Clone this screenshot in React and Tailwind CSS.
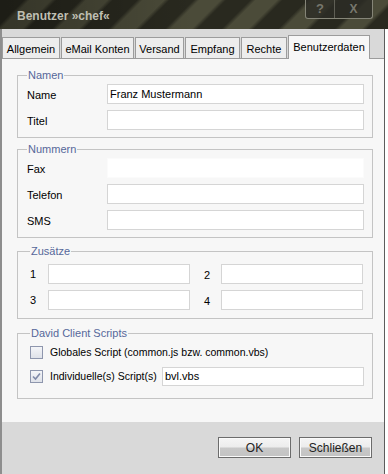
import React from "react";

const tabs = [
  { label: "Allgemein", w: "w-[58px]" },
  { label: "eMail Konten", w: "w-[73px]" },
  { label: "Versand", w: "w-[49px]" },
  { label: "Empfang", w: "w-[55px]" },
  { label: "Rechte", w: "w-[46px]" },
];

function Field({ value = "", disabled = false, className = "" }) {
  return (
    <div
      className={`h-[20px] px-[2px] flex items-center bg-white border ${
        disabled ? "border-[#fbfbfb]" : "border-[#d5d5d5]"
      } ${className}`}
    >
      {value}
    </div>
  );
}

function Group({ title, className = "", children }) {
  return (
    <fieldset className={`border border-[#c4c4c4] pl-[9px] pr-[8px] ${className}`}>
      <legend className="px-[1px] leading-[13px] text-[#56679a]">{title}</legend>
      {children}
    </fieldset>
  );
}

function Row({ label, children }) {
  return (
    <div className="flex items-center">
      <span className="w-[80px] pt-[2px]">{label}</span>
      <div className="flex-1">{children}</div>
    </div>
  );
}

function Check({ checked }) {
  return (
    <span className="shrink-0 w-[13px] h-[13px] border border-[#8e96ad] bg-[linear-gradient(to_bottom,#f4f5f8,#dfe2e9)] flex items-center justify-center">
      {checked && (
        <svg width="11" height="11" viewBox="0 0 11 11">
          <path d="M2 5.5 L4.5 8 L9 2.5" fill="none" stroke="#7f89a8" strokeWidth="1.6" />
        </svg>
      )}
    </span>
  );
}

function Button({ children }) {
  return (
    <button className="w-[73px] h-[21px] border border-[#6c6c6c] bg-[linear-gradient(to_bottom,#f5f5f5_0%,#ececec_48%,#c8c8c8_52%,#c3c3c3_100%)] shadow-[inset_0_0_0_1px_#fafafa] text-[12px] text-[#222] leading-none">
      {children}
    </button>
  );
}

export default function App() {
  return (
    <div className="w-[388px] h-[474px] bg-white overflow-hidden font-['Liberation_Sans',Arial,sans-serif] text-[11px] text-black">
      {/* title bar */}
      <div className="h-[29px] flex items-start bg-[linear-gradient(to_right,rgba(0,0,0,0.3),rgba(0,0,0,0)_50%),repeating-linear-gradient(135deg,#29291f_0px,#29291f_17px,#4b4b39_21px,#4b4b39_36px,#29291f_40px)]">
        <span className="pl-[17px] pt-[7px] text-[12px] font-bold text-[#bfbfb2]">
          Benutzer »chef«
        </span>
        <div className="ml-auto mr-[15px] flex h-[19px] border border-t-0 border-[#858578] rounded-b-[3px] bg-[#2c2c25]/80">
          <span className="w-[29px] flex items-center justify-center text-[13px] font-bold text-[#77776d] border-r border-[#5f5f55]">
            ?
          </span>
          <span className="w-[37px] flex items-center justify-center text-[12px] font-bold text-[#77776d]">
            X
          </span>
        </div>
      </div>

      <div className="w-[385px] h-[445px] flex flex-col border-l-2 border-r border-l-[#8e8e8e] border-r-[#5c5c5c] bg-[#d9d9d9]">
        {/* tabs */}
        <div className="h-[29px] flex items-end gap-[1px]">
          {tabs.map((t) => (
            <div
              key={t.label}
              className={`${t.w} h-[21px] flex items-center justify-center bg-[#ededed] border border-b-0 border-[#9c9c9c] pt-[2px]`}
            >
              {t.label}
            </div>
          ))}
          <div className="w-[82px] h-[24px] -mb-[1px] relative z-10 flex items-center justify-center bg-[#f7f7f7] border border-b-0 border-[#9c9c9c]">
            Benutzerdaten
          </div>
        </div>

        {/* panel */}
        <div className="h-[364px] bg-[#f7f7f7] border-t border-[#9c9c9c] pl-[15px] pr-[11px] pt-[10px] flex flex-col">
          <Group title="Namen" className="pt-[2px] pb-[7px]">
            <div className="flex flex-col gap-[6px]">
              <Row label="Name">
                <Field value="Franz Mustermann" />
              </Row>
              <Row label="Titel">
                <Field />
              </Row>
            </div>
          </Group>

          <Group title="Nummern" className="mt-[5px] pt-[2px] pb-[7px]">
            <div className="flex flex-col gap-[6px]">
              <Row label="Fax">
                <Field disabled />
              </Row>
              <Row label="Telefon">
                <Field />
              </Row>
              <Row label="SMS">
                <Field />
              </Row>
            </div>
          </Group>

          <Group title="Zusätze" className="mt-[7px] pt-[6px] pb-[8px] !pl-[12px]">
            <div className="grid grid-cols-[18px_142px_31px_142px] gap-y-[6px] items-center">
              <span>1</span>
              <Field />
              <span className="pl-[14px] pt-[3px]">2</span>
              <Field />
              <span>3</span>
              <Field />
              <span className="pl-[14px] pt-[3px]">4</span>
              <Field />
            </div>
          </Group>

          <Group title="David Client Scripts" className="mt-[8px] pt-[6px] pb-[12px] !pl-[12px]">
            <div className="flex flex-col gap-[8px] text-[10.5px]">
              <label className="flex items-center gap-[7px] h-[13px]">
                <Check />
                <span className="whitespace-nowrap">Globales Script (common.js bzw. common.vbs)</span>
              </label>
              <div className="flex items-center">
                <label className="shrink-0 flex items-center gap-[7px] w-[132px]">
                  <Check checked />
                  <span className="whitespace-nowrap">Individuelle(s) Script(s)</span>
                </label>
                <Field value="bvl.vbs" className="flex-1 !h-[19px] text-[11px]" />
              </div>
            </div>
          </Group>
        </div>

        {/* buttons */}
        <div className="flex-1 flex justify-end items-start gap-[8px] pt-[15px] pr-[12px]">
          <Button>OK</Button>
          <Button>Schließen</Button>
        </div>
      </div>
    </div>
  );
}
